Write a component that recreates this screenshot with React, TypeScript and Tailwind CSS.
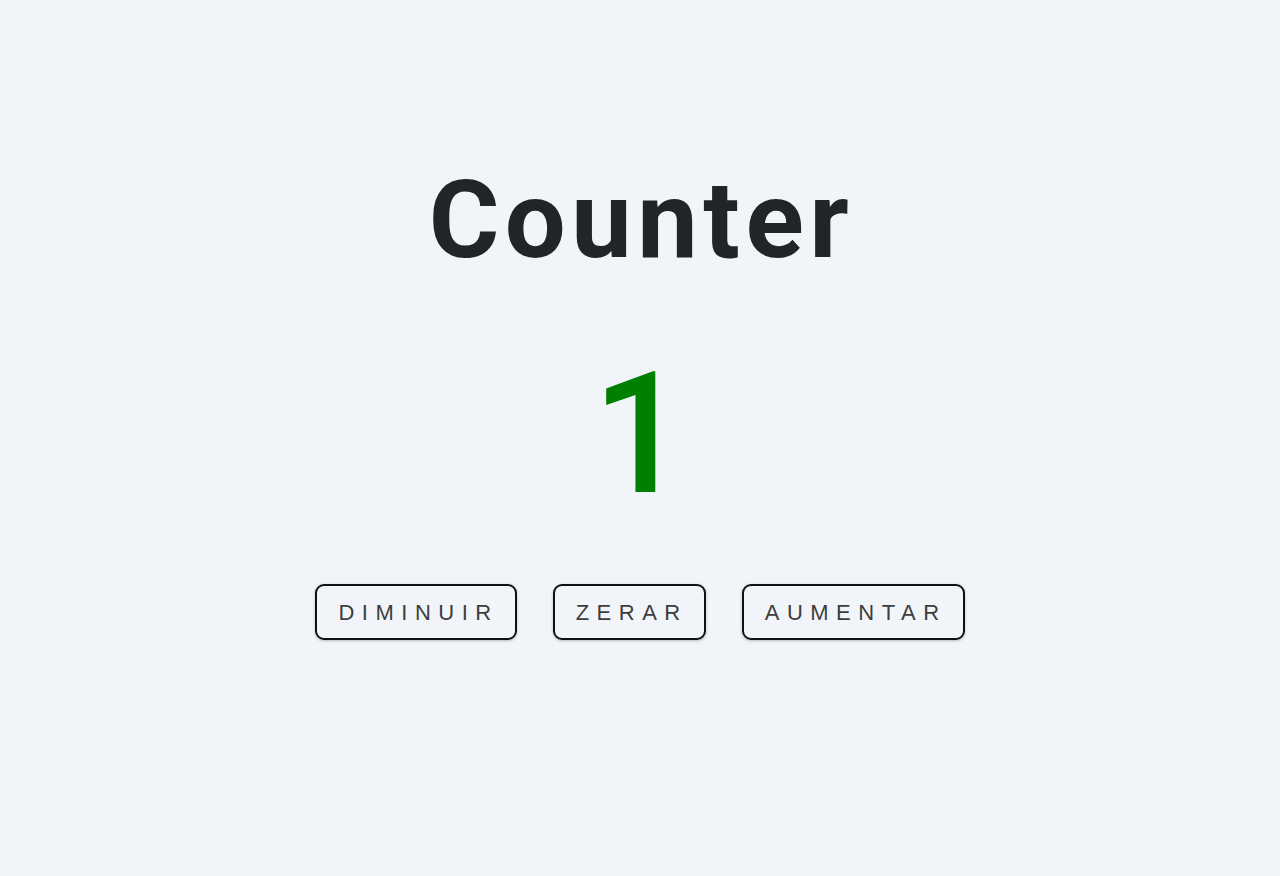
import React, { useState } from "react";

export default function App() {
  const [count, setCount] = useState(1);
  const color = count > 0 ? "text-[#008000]" : count < 0 ? "text-[#dc2626]" : "text-[#212529]";
  const btn =
    "inline-flex h-14 items-center rounded-[9px] border-2 border-[#111111] bg-transparent pl-[21px] pr-[16px] text-[22px] tracking-[7.5px] text-[#3d3d3d] shadow-[0_1px_3px_rgba(0,0,0,0.25)] [font-family:'Liberation_Sans',Arial,sans-serif]";
  return (
    <div className="min-h-screen w-full bg-[#f1f5f9] flex flex-col items-center pt-[166px]">
      <h1 className="text-[108px] leading-[108px] font-bold tracking-[5.5px] text-[#212529] [font-family:Roboto,sans-serif] pl-[3px]">
        Counter
      </h1>
      <div className={`mt-[77px] text-[168px] leading-[168px] font-medium ${color} [font-family:Roboto,sans-serif]`}>
        {count}
      </div>
      <div className="mt-[65px] flex gap-9">
        <button className={btn} onClick={() => setCount(count - 1)}>DIMINUIR</button>
        <button className={btn} onClick={() => setCount(0)}>ZERAR</button>
        <button className={btn} onClick={() => setCount(count + 1)}>AUMENTAR</button>
      </div>
    </div>
  );
}
